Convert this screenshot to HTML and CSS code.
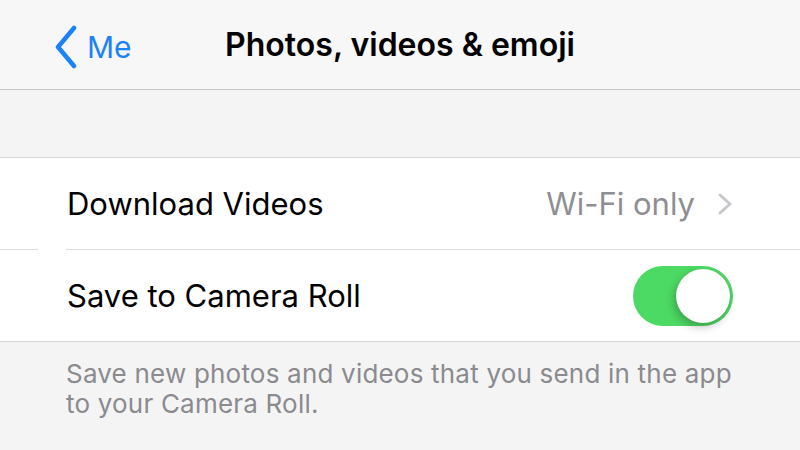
FILE: index.html
```html
<!DOCTYPE html>
<html>
<head>
<meta charset="utf-8">
<link rel="stylesheet" href="styles.css">
</head>
<body>
<div class="nav">
  <div class="back">
    <svg class="back-chev" width="26" height="44" viewBox="0 0 26 44"><path d="M21 3 L5 22 L21 41" fill="none" stroke="#1a82fb" stroke-width="4.5" stroke-linecap="round" stroke-linejoin="round"/></svg>
    <span class="back-label">Me</span>
  </div>
  <div class="title">Photos, videos &amp; emoji</div>
</div>
<div class="spacer"></div>
<div class="group">
  <div class="row">
    <span class="label">Download Videos</span>
    <span class="value">Wi-Fi only</span>
    <svg class="chev" width="16" height="24" viewBox="0 0 16 24"><path d="M3 3 L13 12 L3 21" fill="none" stroke="#c7c7cc" stroke-width="3" stroke-linecap="round" stroke-linejoin="round"/></svg>
  </div>
  <div class="sep"><span class="sep-a"></span><span class="sep-b"></span></div>
  <div class="row">
    <span class="label">Save to Camera Roll</span>
    <span class="toggle"><span class="knob"></span></span>
  </div>
</div>
<div class="footer">Save new photos and videos that you send in the app<br>to your Camera Roll.</div>
</body>
</html>
```
FILE: styles.css
```css
html, body {
  margin: 0;
  padding: 0;
  background: #f4f4f4;
  font-family: Inter, "Noto Sans", "Liberation Sans", sans-serif;
}
.nav {
  height: 89px;
  background: #f7f7f7;
  border-bottom: 1px solid #c9c9c9;
  display: flex;
  align-items: center;
  justify-content: center;
  position: relative;
}
.back {
  position: absolute;
  left: 53px;
  top: 25px;
  display: flex;
  align-items: center;
  gap: 8px;
}
.back-label {
  color: #1a82fb;
  font-size: 30px;
}
.title {
  font-size: 32px;
  font-weight: 600;
  color: #000;
  margin-top: -1px;
}
.spacer {
  height: 67px;
  border-bottom: 1px solid #d6d6d6;
}
.group {
  background: #fff;
  border-bottom: 1px solid #d6d6d6;
}
.row {
  height: 91px;
  display: flex;
  align-items: center;
  padding: 0 67px 0 67px;
}
.label {
  font-size: 31px;
  color: #000;
  flex: 1;
}
.value {
  font-size: 31px;
  color: #8e8e93;
}
.chev {
  margin-left: 22px;
}
.sep {
  display: flex;
  height: 1px;
}
.sep-a {
  width: 38px;
  background: #dcdcdc;
}
.sep-b {
  flex: 1;
  margin-left: 28px;
  background: #dcdcdc;
}
.toggle {
  width: 100px;
  height: 60px;
  border-radius: 30px;
  background: #4cd964;
  position: relative;
}
.knob {
  position: absolute;
  right: 3px;
  top: 3px;
  width: 54px;
  height: 54px;
  border-radius: 50%;
  background: #fff;
  box-shadow: -2px 4px 8px rgba(0,0,0,0.25), 0 0 1px rgba(0,0,0,0.1);
}
.footer {
  padding: 17px 66px 0 66px;
  font-size: 26px;
  line-height: 30px;
  color: #8a8a8f;
  letter-spacing: 0.2px;
}
```
